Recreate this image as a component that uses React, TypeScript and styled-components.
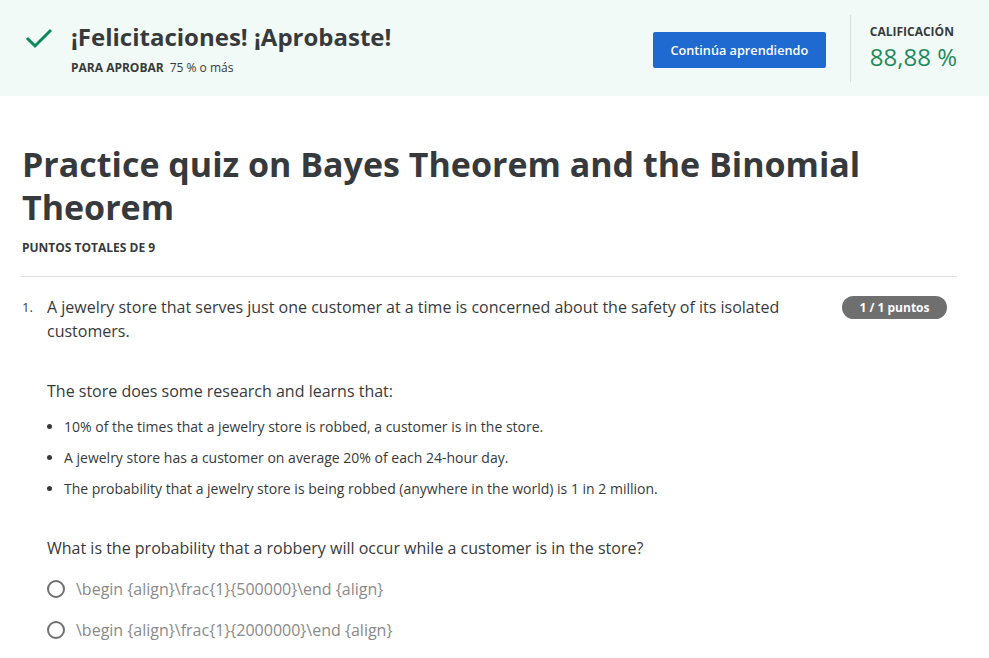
import React from 'react';
import styled, { createGlobalStyle } from 'styled-components';

const GlobalStyle = createGlobalStyle`
  body {
    margin: 0;
    background: #ffffff;
    font-family: "Open Sans", "Noto Sans", sans-serif;
    color: #373a3c;
  }
`

const Banner = styled.header`
  height: 96px;
  background: #f2faf7;
  display: flex;
  align-items: center;
  justify-content: space-between;
  padding: 0 32px 0 24px;
  box-sizing: border-box;
`

const BannerLeft = styled.div`
  display: flex;
  align-items: flex-start;
  gap: 17px;
  margin-top: 1px;
`

const CheckIcon = styled.svg`
  width: 30px;
  height: 24px;
  margin-top: 5px;
`

const BannerTitle = styled.h2`
  margin: 0;
  font-size: 24px;
  line-height: 32px;
  font-weight: 700;
  color: #373a3c;
`

const PassLine = styled.div`
  margin-top: 7px;
  font-size: 12px;
  line-height: 16px;
  color: #373a3c;
`

const PassLabel = styled.span`
  font-weight: 700;
  margin-right: 6px;
`

const BannerRight = styled.div`
  display: flex;
  align-items: center;
  height: 100%;
`

const ContinueButton = styled.button`
  height: 36px;
  width: 173px;
  border: none;
  border-radius: 2px;
  background: #1f6ad0;
  color: #ffffff;
  font-family: inherit;
  font-size: 12.7px;
  font-weight: 600;
  cursor: pointer;
  margin-top: 4px;
`

const Divider = styled.div`
  width: 1px;
  height: 67px;
  background: #dcdfe0;
  margin: 0 19px 0 24px;
`

const Grade = styled.div`
  display: flex;
  flex-direction: column;
  margin-top: -1px;
`

const GradeLabel = styled.span`
  font-size: 12px;
  line-height: 17px;
  font-weight: 700;
  color: #373a3c;
`

const GradeValue = styled.span`
  font-size: 24px;
  line-height: 33px;
  color: #1f8a5a;
`

const Main = styled.main`
  padding: 0 32px 0 21px;
`

const QuizTitle = styled.h1`
  margin: 47px 0 0 1px;
  font-size: 34px;
  line-height: 43px;
  font-weight: 700;
  color: #373a3c;
`

const TotalPoints = styled.div`
  margin: 11px 0 0 1px;
  font-size: 12px;
  line-height: 16px;
  font-weight: 700;
  color: #373a3c;
`

const Rule = styled.hr`
  border: none;
  border-top: 1px solid #dcdfe0;
  margin: 20px 0 0;
`

const Question = styled.section`
  display: flex;
  align-items: flex-start;
  padding: 18px 10px 0 1px;
`

const Number = styled.span`
  width: 25px;
  flex-shrink: 0;
  font-size: 13px;
  line-height: 24px;
`

const QuestionBody = styled.div`
  flex: 1;
`

const Prompt = styled.p<{ $gap?: number }>`
  margin: ${p => p.$gap ?? 0}px 0 0;
  font-size: 16px;
  line-height: 24px;
  color: #373a3c;
  max-width: 740px;
`

const Facts = styled.ul`
  margin: 14px 0 0;
  padding: 0 0 0 17px;
`

const Fact = styled.li`
  font-size: 14px;
  line-height: 20px;
  margin-bottom: 11px;
  color: #373a3c;
`

const Badge = styled.span`
  flex-shrink: 0;
  width: 105px;
  height: 23px;
  border-radius: 12px;
  background: #6f6f6f;
  color: #ffffff;
  font-size: 12px;
  font-weight: 700;
  line-height: 23px;
  text-align: center;
  margin-top: 1px;
`

const Options = styled.div`
  margin-top: 17px;
  display: flex;
  flex-direction: column;
  gap: 17px;
`

const Option = styled.label`
  display: flex;
  align-items: center;
  gap: 11px;
  font-size: 16px;
  line-height: 24px;
  color: #8a8a8a;
  cursor: pointer;
`

const Radio = styled.span`
  width: 18px;
  height: 18px;
  box-sizing: border-box;
  border: 2px solid #6f6f6f;
  border-radius: 50%;
  background: #ffffff;
`

const facts = [
  '10% of the times that a jewelry store is robbed, a customer is in the store.',
  'A jewelry store has a customer on average 20% of each 24-hour day.',
  'The probability that a jewelry store is being robbed (anywhere in the world) is 1 in 2 million.',
]

const options = [
  '\\begin {align}\\frac{1}{500000}\\end {align}',
  '\\begin {align}\\frac{1}{2000000}\\end {align}',
]

const App: React.FC = () => {
  return (
    <>
      <GlobalStyle />
      <Banner>
        <BannerLeft>
          <CheckIcon viewBox="0 0 30 24">
            <polyline points="3,12 11,20 27,4" fill="none" stroke="#0a8a56" strokeWidth="3" />
          </CheckIcon>
          <div>
            <BannerTitle>¡Felicitaciones! ¡Aprobaste!</BannerTitle>
            <PassLine>
              <PassLabel>PARA APROBAR</PassLabel>75 % o más
            </PassLine>
          </div>
        </BannerLeft>
        <BannerRight>
          <ContinueButton>Continúa aprendiendo</ContinueButton>
          <Divider />
          <Grade>
            <GradeLabel>CALIFICACIÓN</GradeLabel>
            <GradeValue>88,88 %</GradeValue>
          </Grade>
        </BannerRight>
      </Banner>
      <Main>
        <QuizTitle>Practice quiz on Bayes Theorem and the Binomial Theorem</QuizTitle>
        <TotalPoints>PUNTOS TOTALES DE 9</TotalPoints>
        <Rule />
        <Question>
          <Number>1.</Number>
          <QuestionBody>
            <Prompt>
              A jewelry store that serves just one customer at a time is concerned about the safety of its isolated customers.
            </Prompt>
            <Prompt $gap={36}>The store does some research and learns that:</Prompt>
            <Facts>
              {facts.map(f => (
                <Fact key={f}>{f}</Fact>
              ))}
            </Facts>
            <Prompt $gap={37}>What is the probability that a robbery will occur while a customer is in the store?</Prompt>
            <Options>
              {options.map(o => (
                <Option key={o}>
                  <Radio />
                  {o}
                </Option>
              ))}
            </Options>
          </QuestionBody>
          <Badge>1 / 1 puntos</Badge>
        </Question>
      </Main>
    </>
  )
}

export default App;
